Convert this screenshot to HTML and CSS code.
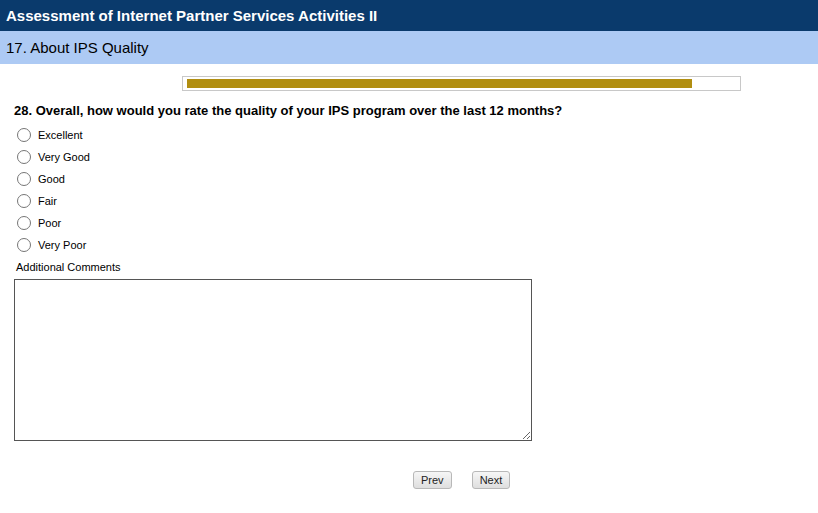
FILE: index.html
```html
<!DOCTYPE html>
<html lang="en">
<head>
    <meta charset="UTF-8">
    <title>Assessment of Internet Partner Services Activities II</title>
    <link rel="stylesheet" href="styles.css">
</head>
<body>
    <div class="survey-title">Assessment of Internet Partner Services Activities II</div>
    <div class="section-title">17. About IPS Quality</div>

    <div class="progress-wrap">
        <div class="progress">
            <div class="progress-fill" style="width: 92%;"></div>
        </div>
    </div>

    <form class="question">
        <h2>28. Overall, how would you rate the quality of your IPS program over the last 12 months?</h2>
        <ul class="options">
            <li><label><input type="radio" name="q28"> Excellent</label></li>
            <li><label><input type="radio" name="q28"> Very Good</label></li>
            <li><label><input type="radio" name="q28"> Good</label></li>
            <li><label><input type="radio" name="q28"> Fair</label></li>
            <li><label><input type="radio" name="q28"> Poor</label></li>
            <li><label><input type="radio" name="q28"> Very Poor</label></li>
        </ul>
        <label class="comments-label" for="comments">Additional Comments</label>
        <textarea id="comments"></textarea>

        <div class="nav">
            <button type="button">Prev</button>
            <button type="button">Next</button>
        </div>
    </form>
</body>
</html>
```

FILE: styles.css
```css
body {
    font-family: "Liberation Sans", Arial, sans-serif;
    margin: 0;
    background-color: #fff;
    color: #000;
}

.survey-title {
    background-color: #0a3a6c;
    color: #fff;
    font-size: 15px;
    font-weight: bold;
    height: 31px;
    line-height: 31px;
    padding-left: 6px;
}

.section-title {
    background-color: #adcaf4;
    font-size: 15px;
    height: 33px;
    line-height: 33px;
    padding-left: 6px;
}

.progress-wrap {
    padding: 12px 0 0 182px;
}

.progress {
    width: 549px;
    height: 9px;
    padding: 2px 4px;
    border: 1px solid #c8c8c8;
}

.progress-fill {
    height: 9px;
    background-color: #b18e10;
}

.question {
    margin: 0;
    padding: 0 0 0 14px;
}

.question h2 {
    font-size: 13px;
    font-weight: bold;
    margin: 12px 0 6px;
}

.options {
    list-style: none;
    margin: 0;
    padding: 0;
}

.options li {
    height: 22px;
    display: flex;
    align-items: center;
}

.options label {
    display: flex;
    align-items: center;
    font-size: 11px;
}

.options input {
    width: 14px;
    height: 14px;
    margin: 0 7px 0 3px;
}

.comments-label {
    display: block;
    font-size: 11px;
    margin: 5px 0 6px 2px;
}

textarea {
    display: block;
    width: 518px;
    height: 162px;
    box-sizing: border-box;
    border: 1px solid #555;
    margin: 0;
}

.nav {
    display: flex;
    gap: 20px;
    padding: 30px 0 0 399px;
}

.nav button {
    font-family: "Liberation Sans", Arial, sans-serif;
    font-size: 11px;
    height: 18px;
    padding: 0 7px;
    border: 1px solid #b8b8b8;
    border-radius: 3px;
    background: linear-gradient(#f6f6f6, #dedede);
    color: #222;
}
```
